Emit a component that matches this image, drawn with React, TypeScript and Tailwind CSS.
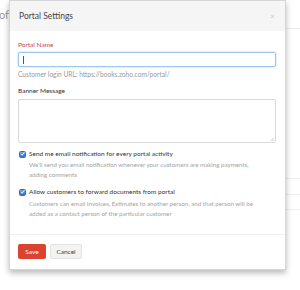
import React from 'react';

const Check: React.FC = () => (
    <span className="w-[7px] h-[7px] shrink-0 rounded-[1.5px] bg-gradient-to-b from-[#6fa8ea] to-[#2f72d0] border border-[#2d68bf] flex items-center justify-center">
        <svg viewBox="0 0 10 10" className="w-[6px] h-[6px]">
            <path d="M2 5.2 L4.2 7.5 L8.2 2.2" stroke="#fff" strokeWidth="1.8" fill="none" strokeLinecap="round" strokeLinejoin="round" />
        </svg>
    </span>
);

const App: React.FC = () => {
    return (
        <div className="relative w-[300px] h-[290px] bg-white overflow-hidden" style={{ fontFamily: 'Lato, "Liberation Sans", sans-serif' }}>
            {/* page behind the modal */}
            <div className="absolute left-[-1px] top-[7px] text-[11px] text-[#9a9a9a]">ofi</div>
            <div className="absolute left-[286px] top-[28px] w-[20px] border-t border-[#ececec]" />
            <div className="absolute left-[286px] top-[178px] w-[20px] border-t border-[#efefef]" />
            <div className="absolute left-[286px] top-[194px] w-[20px] border-t border-[#efefef]" />
            <div className="absolute left-[286px] top-[209px] w-[20px] border-t border-[#efefef]" />

            {/* modal */}
            <div className="absolute left-[9px] top-0 w-[277px] bg-white border border-[#d6d6d6] shadow-[0_3px_6px_rgba(0,0,0,0.28)]">
                <div className="h-[30px] bg-[#f5f5f5] pl-[9px] pr-[10px] flex items-center justify-between">
                    <span className="text-[8.5px] text-[#444]">Portal Settings</span>
                    <span className="text-[8px] text-[#c8c8c8] leading-none">×</span>
                </div>

                <div className="pl-[8px] pr-[9px] pt-[10px] pb-[16px] border-b border-[#f0f0f0]">
                    <div className="text-[6.5px] leading-[8px] text-[#c4464d]">Portal Name</div>
                    <div className="mt-[3px] h-[15px] border border-[#9cc6ee] rounded-[2px] shadow-[0_0_2px_rgba(102,170,238,0.6)] flex items-center pl-[4px]">
                        <span className="w-px h-[8px] bg-[#555]" />
                    </div>
                    <div className="mt-[3px] text-[6.6px] leading-[8px] text-[#9a9a9a]">Customer login URL: https://books.zoho.com/portal/</div>

                    <div className="mt-[9px] text-[6.5px] leading-[8px] text-[#333]">Banner Message</div>
                    <div className="relative mt-[4px] h-[44px] border border-[#d9d9d9] rounded-[2px]">
                        <svg viewBox="0 0 6 6" className="absolute right-[1px] bottom-[1px] w-[4px] h-[4px]">
                            <path d="M6 1 L1 6 M6 3.5 L3.5 6" stroke="#aaa" strokeWidth="0.8" />
                        </svg>
                    </div>

                    <div className="mt-[7px] flex items-center gap-[3px] pl-[1px]">
                        <Check />
                        <span className="text-[6.5px] leading-[8px] text-[#333]">Send me email notification for every portal activity</span>
                    </div>
                    <div className="mt-[2px] pl-[11px] text-[6.2px] leading-[10px] text-[#a3a3a3]">
                        We'll send you email notification whenever your customers are making payments,<br />adding comments
                    </div>

                    <div className="mt-[8px] flex items-center gap-[3px] pl-[1px]">
                        <Check />
                        <span className="text-[6.5px] leading-[8px] text-[#333]">Allow customers to forward documents from portal</span>
                    </div>
                    <div className="mt-[3px] pl-[11px] text-[6.2px] leading-[9.5px] text-[#a3a3a3]">
                        Customers can email Invoices, Estimates to another person, and that person will be<br />added as a contact person of the particular customer
                    </div>
                </div>

                <div className="pl-[8px] pt-[9px] pb-[10px] flex gap-[4px]">
                    <button className="h-[15px] w-[28px] bg-[#d9432f] rounded-[2px] text-white text-[6.5px]">Save</button>
                    <button className="h-[15px] w-[32px] bg-[#f3f3f3] border border-[#e2e2e2] rounded-[2px] text-[#444] text-[6.5px]">Cancel</button>
                </div>
            </div>
        </div>
    );
};

export default App;
